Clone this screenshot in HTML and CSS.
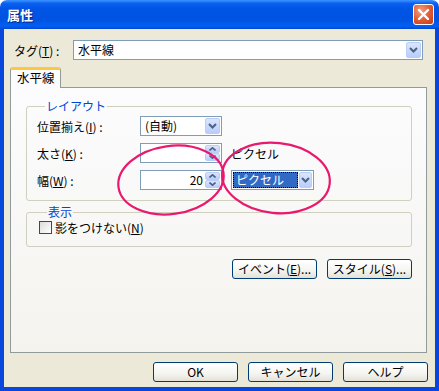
FILE: index.html
```html
<!DOCTYPE html>
<html lang="ja">
<head>
    <meta charset="UTF-8">
    <title>属性</title>
    <link rel="stylesheet" href="styles.css">
</head>
<body>
    <div class="window">
        <div class="titlebar">
            <span class="title">属性</span>
            <span class="close-btn">
                <svg width="13" height="13" viewBox="0 0 13 13"><path d="M2 2 L11 11 M11 2 L2 11" stroke="#fff" stroke-width="2.4" stroke-linecap="round"/></svg>
            </span>
        </div>

        <div class="client">
            <div class="tag-row">
                <span class="tag-label">タグ(<u>T</u>) :</span>
                <div class="combo wide">
                    <span class="combo-text">水平線</span>
                    <span class="drop-btn"><svg width="9" height="6" viewBox="0 0 9 6"><path d="M1 1 L4.5 4.5 L8 1" fill="none" stroke="#4d6185" stroke-width="2"/></svg></span>
                </div>
            </div>

            <div class="tabs">
                <span class="tab active">水平線</span>
            </div>

            <div class="panel">
                <fieldset class="group">
                    <legend>レイアウト</legend>
                    <div class="row">
                        <span class="label">位置揃え(<u>I</u>) :</span>
                        <div class="combo">
                            <span class="combo-text">(自動)</span>
                            <span class="drop-btn"><svg width="9" height="6" viewBox="0 0 9 6"><path d="M1 1 L4.5 4.5 L8 1" fill="none" stroke="#4d6185" stroke-width="2"/></svg></span>
                        </div>
                    </div>
                    <div class="row">
                        <span class="label">太さ(<u>K</u>) :</span>
                        <div class="spinner">
                            <span class="spin-text"></span>
                            <span class="spin-btns">
                                <span class="spin-up"><svg width="7" height="4" viewBox="0 0 7 4"><path d="M0.5 3.5 L3.5 0.8 L6.5 3.5" fill="none" stroke="#4d6185" stroke-width="1.6"/></svg></span>
                                <span class="spin-down"><svg width="7" height="4" viewBox="0 0 7 4"><path d="M0.5 0.5 L3.5 3.2 L6.5 0.5" fill="none" stroke="#4d6185" stroke-width="1.6"/></svg></span>
                            </span>
                        </div>
                        <span class="unit">ピクセル</span>
                    </div>
                    <div class="row">
                        <span class="label">幅(<u>W</u>) :</span>
                        <div class="spinner">
                            <span class="spin-text">20</span>
                            <span class="spin-btns">
                                <span class="spin-up"><svg width="7" height="4" viewBox="0 0 7 4"><path d="M0.5 3.5 L3.5 0.8 L6.5 3.5" fill="none" stroke="#4d6185" stroke-width="1.6"/></svg></span>
                                <span class="spin-down"><svg width="7" height="4" viewBox="0 0 7 4"><path d="M0.5 0.5 L3.5 3.2 L6.5 0.5" fill="none" stroke="#4d6185" stroke-width="1.6"/></svg></span>
                            </span>
                        </div>
                        <div class="combo unit-combo">
                            <span class="combo-text selected">ピクセル</span>
                            <span class="drop-btn"><svg width="9" height="6" viewBox="0 0 9 6"><path d="M1 1 L4.5 4.5 L8 1" fill="none" stroke="#4d6185" stroke-width="2"/></svg></span>
                        </div>
                    </div>
                </fieldset>

                <fieldset class="group display">
                    <legend>表示</legend>
                    <label class="check-row">
                        <span class="checkbox"></span>
                        <span>影をつけない(<u>N</u>)</span>
                    </label>
                </fieldset>

                <div class="panel-buttons">
                    <span class="btn">イベント(<u>E</u>)...</span>
                    <span class="btn">スタイル(<u>S</u>)...</span>
                </div>
            </div>

            <div class="footer">
                <span class="btn">OK</span>
                <span class="btn">キャンセル</span>
                <span class="btn">ヘルプ</span>
            </div>
        </div>

        <!-- hand-drawn marks over the dialog -->
        <svg class="marks" width="439" height="391" viewBox="0 0 439 391">
            <ellipse cx="171" cy="180" rx="53" ry="34" transform="rotate(-8 171 180)" fill="none" stroke="#e8196e" stroke-width="2.2"/>
            <ellipse cx="276" cy="178" rx="54" ry="35" transform="rotate(6 276 178)" fill="none" stroke="#e8196e" stroke-width="2.2"/>
        </svg>
    </div>
</body>
</html>
```

FILE: styles.css
```css
body {
    margin: 0;
    background-color: #ffffff;
    font-family: "Noto Sans CJK JP", "DejaVu Sans", sans-serif;
    font-size: 12px;
    color: #000;
}

u {
    text-decoration: underline;
    text-underline-offset: 1px;
}

.window {
    position: relative;
    width: 439px;
    height: 391px;
    display: flex;
    flex-direction: column;
    border-radius: 7px 7px 0 0;
    overflow: hidden;
}

.titlebar {
    height: 29px;
    flex: none;
    display: flex;
    align-items: center;
    justify-content: space-between;
    padding: 0 5px 0 7px;
    background: linear-gradient(to bottom, #3d95ff 0%, #0a5ff2 12%, #0055e5 30%, #0053e1 70%, #0060f5 90%, #0046d0 100%);
}

.title {
    color: #fff;
    font-weight: bold;
    font-size: 13px;
    text-shadow: 1px 1px 0 #0a1e7a;
}

.close-btn {
    width: 21px;
    height: 21px;
    box-sizing: border-box;
    border: 1px solid #fff;
    border-radius: 3px;
    background: radial-gradient(circle at 35% 30%, #f0a080, #e0582f 55%, #c23b12);
    display: flex;
    align-items: center;
    justify-content: center;
}

.client {
    flex: 1;
    background-color: #ece9d8;
    border: 4px solid #0847dc;
    border-top: none;
    padding: 11px 7px 0 6px;
    display: flex;
    flex-direction: column;
}

.tag-row {
    display: flex;
    align-items: center;
    padding-left: 4px;
    padding-right: 5px;
}

.tag-label {
    width: 59px;
}

.combo {
    height: 20px;
    box-sizing: border-box;
    border: 1px solid #7f9db9;
    background: #fff;
    display: flex;
    align-items: stretch;
    padding: 1px;
}

.combo.wide {
    flex: 1;
}

.combo-text {
    flex: 1;
    padding-left: 3px;
    line-height: 16px;
}

.drop-btn, .spin-up, .spin-down {
    width: 15px;
    box-sizing: border-box;
    border: 1px solid #b9cdf6;
    border-radius: 2px;
    background: linear-gradient(to bottom, #dbe6fd, #b8cdfa);
    display: flex;
    align-items: center;
    justify-content: center;
}

.tabs {
    display: flex;
    margin-top: 7px;
    height: 20px;
    position: relative;
    z-index: 1;
}

.tab {
    width: 51px;
    box-sizing: border-box;
    height: 21px;
    border: 1px solid #919b9c;
    border-bottom: none;
    border-top: 3px solid #ffc83c;
    border-radius: 3px 3px 0 0;
    background: #fcfcfe;
    padding-left: 6px;
    line-height: 16px;
    font-size: 12.5px;
}

.panel {
    height: 266px;
    box-sizing: border-box;
    margin-right: 1px;
    border: 1px solid #919b9c;
    background: linear-gradient(to bottom, #fcfcfe, #f4f3ee);
    padding: 11px 14px 0 15px;
}

.group {
    margin: 0;
    min-width: 0;
    border: 1px solid #d0d0bf;
    border-radius: 3px;
    padding: 3px 10px 10px 10px;
}

.group legend {
    color: #0046d5;
    padding: 0 1px;
    margin-left: 8px;
    line-height: 14px;
}

.row {
    display: flex;
    align-items: center;
    height: 20px;
}

.row + .row {
    margin-top: 7px;
}

.label {
    width: 103px;
}

.row .combo, .spinner {
    width: 82px;
}

.spinner {
    height: 20px;
    box-sizing: border-box;
    border: 1px solid #7f9db9;
    background: #fff;
    display: flex;
    padding: 1px;
}

.spin-text {
    flex: 1;
    text-align: right;
    padding-right: 2px;
    line-height: 16px;
}

.spin-btns {
    display: flex;
    flex-direction: column;
    width: 15px;
}

.spin-up, .spin-down {
    flex: 1;
}

.unit {
    margin-left: 9px;
}

.row .unit-combo {
    width: 83px;
    margin-left: 9px;
}

.combo-text.selected {
    flex: none;
    width: 62px;
    margin-right: 1px;
    background: #316ac5;
    color: #fff;
    outline: 1px dotted #000;
    outline-offset: -1px;
}

.group.display {
    margin-top: 4px;
    padding: 1px 10px 12px 12px;
}

.check-row {
    display: flex;
    align-items: center;
    gap: 3px;
    height: 14px;
}

.checkbox {
    width: 13px;
    height: 13px;
    box-sizing: border-box;
    border: 1px solid #1c5180;
    background: linear-gradient(135deg, #dcdcd7, #ffffff);
}

.panel-buttons {
    display: flex;
    justify-content: flex-end;
    gap: 10px;
    margin-top: 12px;
}

.btn {
    width: 85px;
    height: 20px;
    box-sizing: border-box;
    border: 1px solid #003c74;
    border-radius: 3px;
    background: linear-gradient(to bottom, #ffffff 0%, #f4f4f0 60%, #e3e1d6 100%);
    display: flex;
    align-items: center;
    justify-content: center;
    line-height: 16px;
}

.footer {
    display: flex;
    justify-content: flex-end;
    gap: 10px;
    margin-top: 9px;
}

.marks {
    position: absolute;
    top: 0;
    left: 0;
    pointer-events: none;
}
```
